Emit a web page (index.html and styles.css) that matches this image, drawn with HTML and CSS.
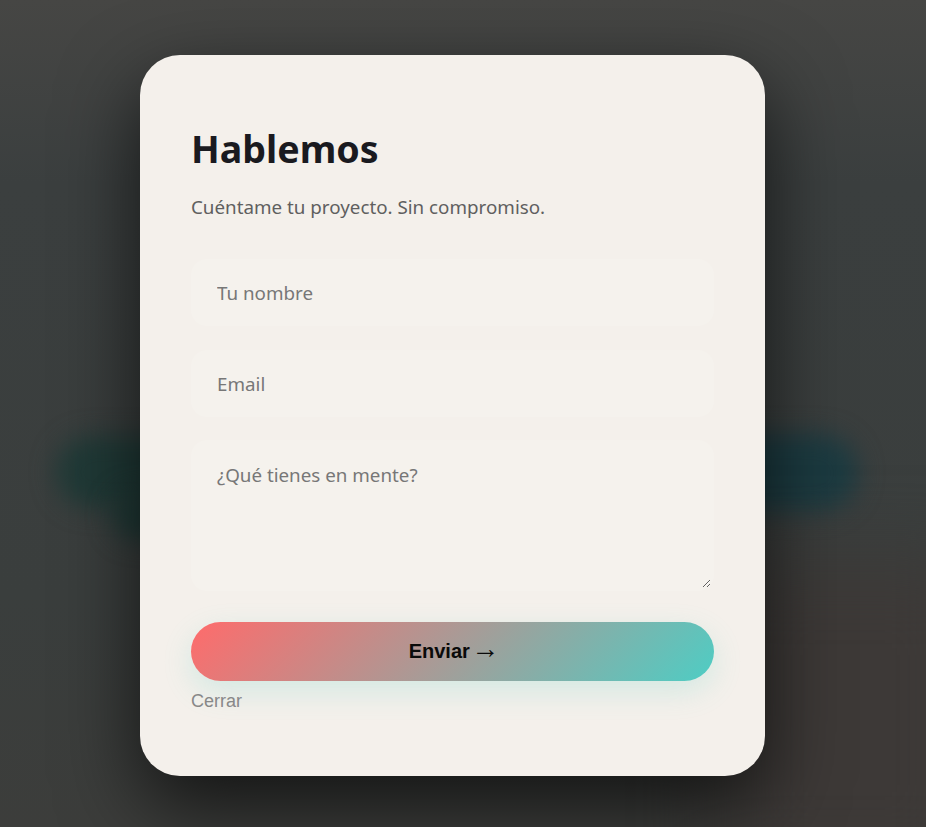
FILE: index.html
```html
<!DOCTYPE html>
<html lang="es">
<head>
  <meta charset="UTF-8">
  <meta name="viewport" content="width=device-width, initial-scale=1.0">
  <title>Hablemos</title>
  <link rel="stylesheet" href="styles.css">
</head>
<body>
  <!-- Fondo borroso detras del modal -->
  <div class="backdrop">
    <span class="blob blob-left"></span>
    <span class="blob blob-left-low"></span>
    <span class="blob blob-right"></span>
    <span class="blob blob-corner"></span>
  </div>

  <div class="modal-wrap">
    <form class="modal">
      <h1>Hablemos</h1>
      <p class="intro">Cuéntame tu proyecto. Sin compromiso.</p>
      <input type="text" class="field" placeholder="Tu nombre">
      <input type="email" class="field" placeholder="Email">
      <textarea class="field field-area" placeholder="¿Qué tienes en mente?"></textarea>
      <button type="button" class="btn-send">Enviar <span class="arrow">→</span></button>
      <button type="button" class="btn-close">Cerrar</button>
    </form>
  </div>
</body>
</html>
```

FILE: styles.css
```css
* {
  box-sizing: border-box;
}

html, body {
  height: 100%;
}

body {
  margin: 0;
  overflow: hidden;
  background: #3d3f3e;
  font-family: "Noto Sans", "Open Sans", sans-serif;
}

/* Fondo */
.backdrop {
  position: absolute;
  inset: 0;
  overflow: hidden;
  background: linear-gradient(180deg, #464644 0, #3b3f3f 22%, #3a3e3d 72%, #3c3d3b 100%);
}

.blob {
  position: absolute;
  display: block;
  filter: blur(12px);
}

.blob-left {
  left: 56px;
  top: 436px;
  width: 180px;
  height: 72px;
  border-radius: 36px;
  background: #203a37;
}

.blob-left-low {
  left: 112px;
  top: 490px;
  width: 130px;
  height: 50px;
  border-radius: 25px;
  background: #203a37;
}

.blob-right {
  left: 700px;
  top: 434px;
  width: 158px;
  height: 78px;
  border-radius: 39px;
  background: #1c3b41;
}

.blob-corner {
  left: 720px;
  top: 560px;
  width: 260px;
  height: 320px;
  background: #3d3937;
  filter: blur(40px);
}

/* Modal */
.modal-wrap {
  position: relative;
  display: flex;
  justify-content: center;
  padding: 55px 21px 0 0;
}

.modal {
  display: flex;
  flex-direction: column;
  align-items: stretch;
  width: 625px;
  height: 721px;
  padding: 69px 51px 0;
  background: #f4f0eb;
  border-radius: 40px;
  box-shadow: 0 30px 80px rgba(0, 0, 0, 0.68);
}

h1 {
  margin: 0 0 20px;
  font-size: 37.6px;
  line-height: 50px;
  font-weight: 700;
  color: #1a1a1f;
}

.intro {
  margin: 0 0 39px;
  font-size: 18.8px;
  line-height: 26px;
  color: #5f5f5f;
}

.field {
  display: block;
  width: 100%;
  height: 67px;
  margin-bottom: 24px;
  padding: 19px 23px;
  border: 3px solid #f5f2ed;
  border-radius: 16px;
  outline: 0;
  background: #f5f2ed;
  font-family: inherit;
  font-size: 18.8px;
  line-height: 26px;
  color: #1a1a1f;
}

.field::placeholder {
  color: #777;
  opacity: 1;
}

.field-area {
  height: 151px;
  margin-top: -1px;
  margin-bottom: 31px;
}

.btn-send {
  height: 59px;
  border: 0;
  border-radius: 30px;
  background: linear-gradient(135deg, #ff6b6b, #4ecdc4);
  box-shadow: 0 10px 30px rgba(78, 205, 196, 0.2);
  font-family: "Liberation Sans", Arial, sans-serif;
  font-size: 20px;
  font-weight: 700;
  color: #0a0a0a;
}

.arrow {
  margin: 0 -3px 0 -4px;
  font-family: "Liberation Serif", serif;
  font-size: 28px;
  line-height: 0;
  font-weight: 400;
}

.btn-close {
  align-self: flex-start;
  margin-top: 10px;
  padding: 0;
  border: 0;
  background: none;
  font-family: "Liberation Sans", Arial, sans-serif;
  font-size: 18px;
  line-height: 21px;
  color: #888;
}
```
